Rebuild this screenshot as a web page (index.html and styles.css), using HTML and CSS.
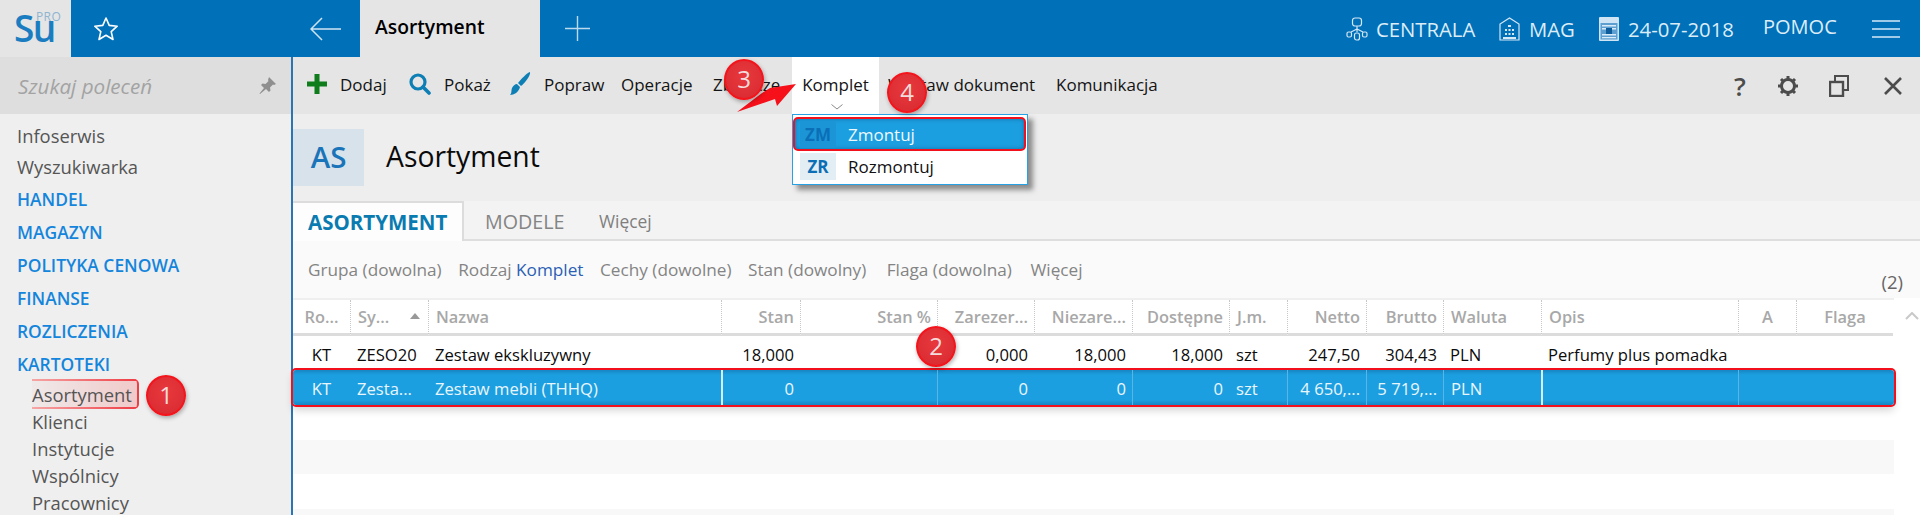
FILE: index.html
```html
<!DOCTYPE html>
<html lang="pl">
<head>
<meta charset="utf-8">
<title>Asortyment</title>
<link rel="stylesheet" href="styles.css">
</head>
<body>
<header class="topbar">
  <div class="logo"><span class="logo-su">Su</span><span class="logo-pro">PRO</span></div>
  <svg class="star" viewBox="0 0 26 26" width="26" height="26"><path d="M13 2l3.2 7.4 8 .8-6 5.4 1.800 7.900-7-4.200-7 4.200 1.800-7.900-6-5.400 8-.8z" fill="none" stroke="#fff" stroke-width="1.600" stroke-linejoin="round"/></svg>
  <svg class="back" viewBox="0 0 31 24" width="31" height="24"><path d="M31 12H2M12 1L1 12l11 11" fill="none" stroke="#cfe4f3" stroke-width="1.500"/></svg>
  <div class="tab-title">Asortyment</div>
  <svg class="plus" viewBox="0 0 25 25" width="25" height="25"><path d="M12.500 0v25M0 12.500h25" fill="none" stroke="#bcd9ee" stroke-width="1.400"/></svg>
  <div class="status">
    <svg class="st-net" viewBox="0 0 22 24" width="22" height="24"><g fill="none" stroke="#d4e8f6" stroke-width="1.200"><rect x="6.500" y="1" width="9" height="8" rx="2.500"/><path d="M11 9v6M11 12l-6 3M11 12l6 3"/><rect x="1" y="15" width="4.500" height="5" rx="1.500"/><rect x="8.500" y="16" width="5" height="7" rx="2"/><rect x="16.500" y="15" width="4.500" height="5" rx="1.500"/></g></svg>
    <span class="st-text st-centrala">CENTRALA</span>
    <svg class="st-house" viewBox="0 0 21 24" width="21" height="24"><path d="M1 23V7l9.500-6L20 7v16z" fill="none" stroke="#d4e8f6" stroke-width="1.200"/><path d="M9 8h3v2H9zM6 12h2v2H6zM9.500 12h2v2h-2zM13 12h2v2h-2zM6 16h2v2H6zM9.500 16h2v2h-2zM13 16h2v2h-2zM4 20h13v2H4z" fill="#d4e8f6"/></svg>
    <span class="st-text st-mag">MAG</span>
    <svg class="st-cal" viewBox="0 0 20 24" width="20" height="24"><rect width="20" height="24" rx="1" fill="#cfe5f5"/><rect x="1.500" y="6" width="17" height="16.500" fill="#5d9fd0"/><path d="M3 8h14v1.500H3zM3 11h14v1.500H3zM3 17h14v1.500H3zM3 20h14v1.200H3z" fill="#d9ebf7"/><rect x="7" y="11" width="6" height="6" fill="#0d5d9c"/></svg>
    <span class="st-text st-date">24-07-2018</span>
    <span class="st-text st-help">POMOC</span>
    <div class="burger"><i></i><i></i><i></i></div>
  </div>
</header>

<div class="body">
  <aside class="side">
    <div class="search">
      <span class="search-text">Szukaj poleceń</span>
      <svg class="pin" viewBox="0 0 17 17" width="17" height="17"><path d="M10 0l7 7-2 1-1-.5-3 3 .5 3-1.500 1.500-3-3L1 17l-.5-.5 4.500-5.500-3-3L3.500 6.500l3 .5 3-3L9 3z" fill="#8f8f8f"/></svg>
    </div>
    <nav class="nav">
      <a class="nav-top">Infoserwis</a>
      <a class="nav-top">Wyszukiwarka</a>
      <a class="nav-sec">HANDEL</a>
      <a class="nav-sec">MAGAZYN</a>
      <a class="nav-sec">POLITYKA CENOWA</a>
      <a class="nav-sec">FINANSE</a>
      <a class="nav-sec">ROZLICZENIA</a>
      <a class="nav-sec">KARTOTEKI</a>
      <a class="nav-sub nav-cur">Asortyment</a>
      <a class="nav-sub">Klienci</a>
      <a class="nav-sub">Instytucje</a>
      <a class="nav-sub">Wspólnicy</a>
      <a class="nav-sub">Pracownicy</a>
    </nav>
  </aside>

  <main class="main">
    <div class="toolbar">
      <div class="tool w-dodaj"><svg viewBox="0 0 20 20" width="20" height="20"><path d="M7.500 0h5v7.500H20v5h-7.500V20h-5v-7.500H0v-5h7.500z" fill="#0f7d1c"/></svg><span>Dodaj</span></div>
      <div class="tool w-pokaz"><svg viewBox="0 0 22 22" width="22" height="22"><circle cx="9" cy="9" r="7" fill="none" stroke="#0e7fb5" stroke-width="3.200"/><path d="M14 14l6 6" stroke="#0e7fb5" stroke-width="3.600" stroke-linecap="round"/></svg><span>Pokaż</span></div>
      <div class="tool w-popraw"><svg viewBox="0 0 22 26" width="22" height="26"><path d="M21 1c1 3-5 11-9 14l-3-3C12 8 18 2 21 1z" fill="#0e7fb5"/><path d="M8 13l3 3c-1 5-6 8-10 8 2-2 1-4 2-7 1-2 3-4 5-4z" fill="#0e7fb5"/></svg><span>Popraw</span></div>
      <div class="tool w-oper"><span>Operacje</span></div>
      <div class="tool w-zb"><span>Zbiorcze</span></div>
      <div class="tool tool-open"><span>Komplet</span><svg class="chev" viewBox="0 0 12 6" width="12" height="6"><path d="M.5.500L6 5 11.500.500" fill="none" stroke="#8a8a8a" stroke-width="1"/></svg></div>
      <div class="tool w-wys"><span>Wystaw dokument</span></div>
      <div class="tool w-kom"><span>Komunikacja</span></div>
      <div class="tool-right">
        <span class="help">?</span>
        <svg viewBox="0 0 22 22" width="22" height="22"><circle cx="11" cy="11" r="6.500" fill="none" stroke="#4c4c4c" stroke-width="3"/><path d="M11 1v4M11 17v4M1 11h4M17 11h4M4 4l3 3M15 15l3 3M18 4l-3 3M7 15l-3 3" stroke="#4c4c4c" stroke-width="3"/></svg>
        <svg viewBox="0 0 20 22" width="20" height="22"><path d="M6 6V1h13v14h-5" fill="none" stroke="#4c4c4c" stroke-width="2"/><rect x="1" y="7" width="13" height="14" fill="none" stroke="#4c4c4c" stroke-width="2.400"/></svg>
        <svg class="close" viewBox="0 0 18 18" width="18" height="18"><path d="M1 1l16 16M17 1L1 17" stroke="#4c4c4c" stroke-width="2.600"/></svg>
      </div>
    </div>

    <div class="titlebar">
      <div class="as-box">AS</div>
      <h1 class="title">Asortyment</h1>
    </div>

    <div class="tabs">
      <div class="tab tab-on">ASORTYMENT</div>
      <div class="tab tab-model">MODELE</div>
      <div class="tab tab-more">Więcej</div>
    </div>

    <div class="filters">
      <span>Grupa (dowolna)</span>
      <span>Rodzaj <b class="accent">Komplet</b></span>
      <span>Cechy (dowolne)</span>
      <span>Stan (dowolny)</span>
      <span class="f-flag">Flaga (dowolna)</span>
      <span class="f-more">Więcej</span>
      <span class="count">(2)</span>
    </div>

    <div class="table-wrap">
      <div class="table">
        <div class="row head">
          <div class="c ctr">Ro...</div>
          <div class="c sort">Sy...<i class="sort-tri"></i></div>
          <div class="c">Nazwa</div>
          <div class="c num">Stan</div>
          <div class="c num">Stan %</div>
          <div class="c num">Zarezer...</div>
          <div class="c num">Niezare...</div>
          <div class="c num">Dostępne</div>
          <div class="c">J.m.</div>
          <div class="c num">Netto</div>
          <div class="c num">Brutto</div>
          <div class="c">Waluta</div>
          <div class="c">Opis</div>
          <div class="c ctr">A</div>
          <div class="c ctr">Flaga</div>
        </div>
        <div class="row data">
          <div class="c ctr">KT</div>
          <div class="c">ZESO20</div>
          <div class="c">Zestaw ekskluzywny</div>
          <div class="c num">18,000</div>
          <div class="c num"></div>
          <div class="c num">0,000</div>
          <div class="c num">18,000</div>
          <div class="c num">18,000</div>
          <div class="c">szt</div>
          <div class="c num">247,50</div>
          <div class="c num">304,43</div>
          <div class="c">PLN</div>
          <div class="c">Perfumy plus pomadka</div>
          <div class="c"></div>
          <div class="c"></div>
        </div>
        <div class="row data selected">
          <div class="c ctr">KT</div>
          <div class="c">Zesta...</div>
          <div class="c">Zestaw mebli (THHQ)</div>
          <div class="c num line-b">0</div>
          <div class="c num"></div>
          <div class="c num line">0</div>
          <div class="c num">0</div>
          <div class="c num line">0</div>
          <div class="c">szt</div>
          <div class="c num line">4 650,...</div>
          <div class="c num line">5 719,...</div>
          <div class="c line">PLN</div>
          <div class="c line-b"></div>
          <div class="c line"></div>
          <div class="c"></div>
        </div>
        <div class="row blank"></div>
        <div class="row blank alt"></div>
        <div class="row blank"></div>
        <div class="row blank alt last"></div>
      </div>
      <svg class="scroll-up" viewBox="0 0 14 8" width="14" height="8"><path d="M1 7l6-6 6 6" fill="none" stroke="#c9c9c9" stroke-width="2"/></svg>
    </div>
  </main>
</div>

<div class="menu">
  <div class="menu-item menu-on"><span class="menu-code">ZM</span><span>Zmontuj</span></div>
  <div class="menu-item"><span class="menu-code">ZR</span><span>Rozmontuj</span></div>
</div>

<svg class="arrow" viewBox="0 0 62 30" width="62" height="30"><path d="M1 29L26 10 34 5 60 1 41 23 39 16z" fill="#f5101a"/></svg>
<div class="badge b1">1</div>
<div class="badge b2">2</div>
<div class="badge b3">3</div>
<div class="badge b4">4</div>
</body>
</html>
```
FILE: styles.css
```css
* { box-sizing: border-box; }
html, body { margin: 0; height: 515px; overflow: hidden; }
body { font-family: "Open Sans", "Noto Sans", sans-serif; font-size: 17px; background: #fff; color: #111; position: relative; }

/* top bar */
.topbar { display: flex; align-items: center; height: 57px; background: #0070b9; }
.logo { width: 71px; height: 57px; background: #e5e5e5; position: relative; flex: none; }
.logo-su { position: absolute; left: 14px; top: 12px; font-size: 37px; line-height: 32px; font-weight: 600; letter-spacing: -1.500px; color: #1b7dc1; }
.logo-pro { position: absolute; left: 36px; top: 12px; font-size: 12px; line-height: 10px; color: #8fb4d0; letter-spacing: .4px; }
.star { margin-left: 22px; flex: none; }
.back { margin-left: 191px; flex: none; }
.tab-title { margin-left: 19px; width: 180px; height: 57px; line-height: 54px; background: #e5e5e5; padding-left: 15px; font-size: 19.300px; font-weight: 600; color: #000; flex: none; }
.plus { margin-left: 25px; flex: none; }
.status { margin-left: auto; display: flex; align-items: center; color: #dcedf8; padding-right: 20px; }
.st-text { font-size: 20.300px; white-space: nowrap; }
.st-net { margin-right: 8px; }
.st-centrala { width: 123px; }
.st-house { margin-right: 9px; }
.st-mag { width: 70px; }
.st-cal { margin-right: 9px; }
.st-date { width: 135px; }
.st-help { width: 109px; font-size: 20px; position: relative; top: -2px; }
.burger { width: 28px; display: flex; flex-direction: column; gap: 6px; }
.burger i { display: block; height: 2px; background: #9fcbe8; }

/* body layout */
.body { display: flex; height: 458px; overflow: hidden; }
.side { width: 293px; flex: none; background: #efefef; border-right: 2px solid #2b75b2; }
.search { height: 57px; background: #dedede; display: flex; align-items: center; padding: 0 15px 0 18px; justify-content: space-between; }
.search-text { font-style: italic; font-size: 20.600px; color: #a3a3a3; }
.pin { flex: none; }
.nav { display: flex; flex-direction: column; padding-top: 6px; }
.nav a { display: block; white-space: nowrap; }
.nav-top { height: 31px; line-height: 31px; padding-left: 17px; font-size: 18.400px; color: #555; }
.nav-top + .nav-sec { margin-top: 1px; }
.nav-sec { height: 33px; line-height: 33px; padding-left: 17px; font-size: 17.400px; font-weight: 600; color: #1485dc; }
.nav-sub { height: 27px; line-height: 27px; margin-left: 32px; font-size: 18.400px; color: #555; }
.nav-cur { width: 107px; height: 30px; line-height: 31px; margin-bottom: -1px; margin-top: -2px; background: linear-gradient(90deg, #f6a6a6, #ef3d45) top / 100% 2px no-repeat, linear-gradient(90deg, #f6a6a6, #ef3d45) bottom / 100% 2px no-repeat, linear-gradient(90deg, #efe9e9, #f1caca); border-right: 2px solid #ef3d45; border-radius: 0 5px 5px 0; }

.main { flex: 1; min-width: 0; display: flex; flex-direction: column; background: #fff; }

/* toolbar */
.toolbar { height: 57px; flex: none; background: #e5e5e5; display: flex; align-items: stretch; padding-left: 14px; font-size: 17px; }
.tool { display: flex; align-items: center; white-space: nowrap; color: #141414; padding-bottom: 3px; flex: none; }
.tool svg { margin-right: 13px; flex: none; }
.w-dodaj { width: 102px; }
.w-pokaz { width: 100px; }
.w-popraw { width: 112px; }
.w-oper { width: 92px; }
.w-zb { width: 79px; }
.tool-open { width: 87px; height: 57px; background: #fff; justify-content: center; position: relative; }
.tool-open .chev { position: absolute; left: 39px; top: 47px; margin: 0; }
.w-wys { width: 168px; margin-left: 9px; }
.w-kom { width: 100px; }
.tool-right { margin-left: auto; display: flex; align-items: center; gap: 30px; padding-right: 18px; }
.close { margin-left: 5px; }
.help { font-size: 26px; font-weight: 600; color: #4c4c4c; width: 14px; text-align: center; }

/* title */
.titlebar { height: 87px; flex: none; background: #eeeeee; display: flex; padding-top: 15px; align-items: flex-start; }
.as-box { width: 71px; height: 57px; background: #d7e2ea; color: #1a74b9; font-size: 29.500px; font-weight: 600; line-height: 55px; text-align: center; flex: none; }
.title { margin: 0 0 0 22px; font-size: 28.300px; font-weight: 400; line-height: 54px; color: #0a0a0a; }

/* tabs */
.tabs { height: 40px; flex: none; background: #f3f3f3; border-bottom: 2px solid #dedede; display: flex; align-items: stretch; }
.tab { line-height: 40px; white-space: nowrap; flex: none; }
.tab-on { width: 171px; height: 40px; padding-left: 15px; background: #fdfdfd; border-top: 2px solid #dcdcdc; border-right: 2px solid #dcdcdc; color: #0a7bb0; font-size: 20.500px; font-weight: 700; line-height: 39px; }
.tab-model { margin-left: 21px; width: 114px; font-size: 19.700px; color: #848484; line-height: 42px; }
.tab-more { font-size: 17.400px; color: #7f7f7f; line-height: 40px; }

/* filters */
.filters { height: 57px; flex: none; background: #fafafa; display: flex; padding: 19px 0 0 15px; gap: 16.500px; font-size: 17.200px; line-height: 20px; color: #848484; position: relative; white-space: nowrap; }
.f-flag { margin-left: 4px; }
.f-more { margin-left: 2px; }
.accent { font-weight: 400; color: #2a5fb5; }
.count { position: absolute; right: 17px; top: 31px; font-size: 18.500px; color: #666; }

/* table */
.table-wrap { flex: none; display: flex; align-items: flex-start; position: relative; }
.table { width: 1601px; flex: none; }
.scroll-up { margin: 14px 0 0 11px; }
.row { display: grid; grid-template-columns: 57px 78px 293px 79px 137px 97px 98px 97px 58px 79px 77px 98px 197px 58px 97px; font-size: 16.600px; }
.c { min-width: 0; padding: 0 7px; white-space: nowrap; overflow: hidden; }
.ctr { text-align: center; padding: 0; }
.num { text-align: right; padding: 0 6px 0 0; }
.head { height: 38px; line-height: 34px; border-top: 2px solid #efefef; color: #a8a8a8; font-weight: 600; font-size: 16.400px; }
.head .c { border-left: 1px dotted #c8c8c8; border-bottom: 3px solid #dcdcdc; height: 36px; }
.head .c:first-child { border-left: 0; }
.sort { position: relative; }
.sort-tri { position: absolute; right: 8px; top: 13px; width: 0; height: 0; border: 5px solid transparent; border-top: 0; border-bottom: 6px solid #999; }
.data { height: 34px; line-height: 38px; color: #0c0c0c; }
.selected { height: 35px; line-height: 38px; background: linear-gradient(#1786c4, #1c9fe0 5px, #1c9fe0 30px, #1786c4); color: #eaf6fd; border-radius: 3px; box-shadow: 0 0 0 2px #f2101c, 0 5px 9px rgba(0,0,0,.18); position: relative; }
.selected .c { height: 35px; }
.line { border-left: 1px solid #58b6e6; }
.line-b { border-left: 2px solid #d6eef9; }
.blank { height: 35px; }
.blank.alt { height: 34px; background: #f8f8f8; }
.blank.last { height: 6px; }

/* dropdown */
.menu { position: absolute; left: 792px; top: 114px; width: 236px; height: 71px; background: #fff; border: 1px solid #27a1e4; box-shadow: 5px 5px 5px rgba(60,60,60,.55); padding-top: 2px; font-size: 17px; color: #111; }
.menu-item { display: flex; align-items: center; height: 27px; padding-left: 7px; }
.menu-code { width: 36px; height: 27px; line-height: 27px; background: #e3edf4; color: #0a6fb5; font-weight: 700; font-size: 17px; text-align: center; margin-right: 12px; flex: none; }
.menu-on { height: 34px; margin: 0 1px 2px 0; padding-left: 5px; background: #1c9fe0; color: #eef8fe; border: 2px solid #f2101c; border-radius: 5px; box-shadow: inset 0 0 4px rgba(0,60,110,.5); }
.menu-on .menu-code { background: #1b95d6; color: #0b6fb8; }

/* annotations */
.arrow { position: absolute; left: 736px; top: 83px; }
.badge { position: absolute; width: 40px; height: 41px; border-radius: 50%; background: radial-gradient(circle at 50% 40%, #e8383d, #d62a30); border: 2px solid #f4141c; box-shadow: 1px 2px 4px rgba(0,0,0,.3); color: #f4dcdc; font-size: 24px; line-height: 35px; text-align: center; }
.b1 { left: 146px; top: 375px; }
.b2 { left: 916px; top: 326px; }
.b3 { left: 724px; top: 59px; }
.b4 { left: 887px; top: 72px; }
```
